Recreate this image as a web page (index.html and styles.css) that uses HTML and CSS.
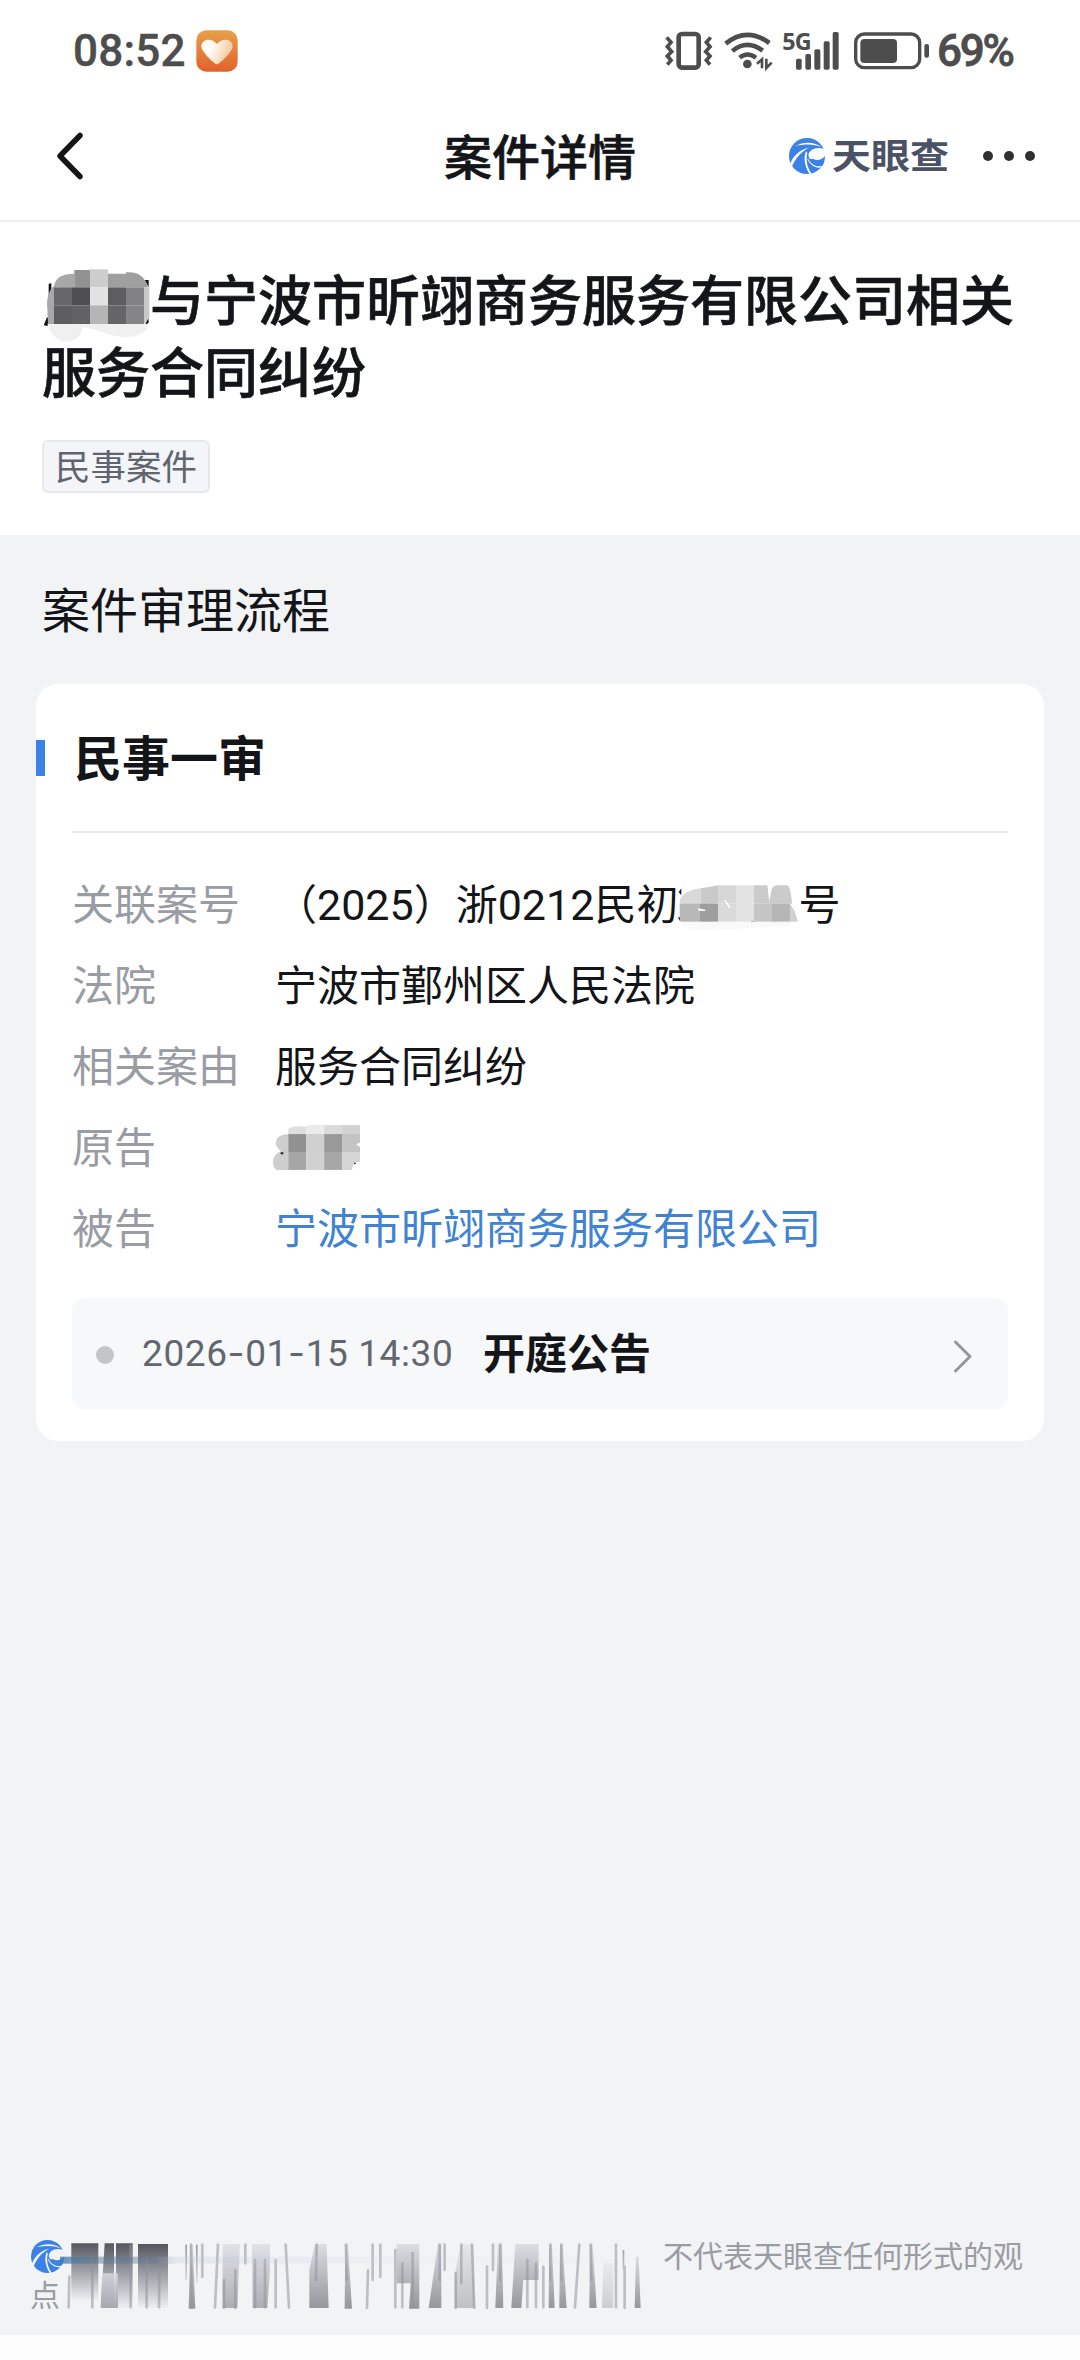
FILE: index.html
```html
<!DOCTYPE html>
<html lang="zh-CN">
<head>
<meta charset="utf-8">
<title>案件详情</title>
<link rel="stylesheet" href="styles.css">
</head>
<body>
<svg class="defs" aria-hidden="true">
  <defs>
    <symbol id="swirl" viewBox="0 0 108 108">
      <circle cx="54" cy="54" r="54" fill="#3c82e6"/>
      <path d="M103 32 C88 27 68 30 60 44 C55 55 62 68 78 70 L109 72 V34Z" fill="var(--hole)"/>
      <path d="M72 62 C84 70 98 66 108 54 C108 66 105 76 100 84 C84 84 70 76 62 64Z" fill="#3c82e6"/>
      <path d="M2 80 C14 50 34 34 60 29 C40 38 20 58 8 88Z M18 24 C44 10 78 10 98 28 C76 17 46 18 18 24Z M51 40 C42 62 48 88 62 109 L68 108 C53 88 50 64 55 44Z M57 62 C66 80 84 88 99 84 L97 88 C80 92 64 82 55 64Z" fill="var(--hole)"/>
    </symbol>
    <linearGradient id="heart-bg" x1="0" y1="0" x2="0" y2="1"><stop offset="0" stop-color="#e8a04a"/><stop offset="1" stop-color="#e0622c"/></linearGradient>
    <linearGradient id="heart-fg" x1="0" y1="0" x2="1" y2="0.3"><stop offset="0.4" stop-color="#fffaf4"/><stop offset="1" stop-color="#f4c99c"/></linearGradient>
    <linearGradient id="fall" x1="0" y1="0" x2="0" y2="1"><stop offset="0" stop-color="#54565e"/><stop offset="0.45" stop-color="#9a9ca3"/><stop offset="1" stop-color="#eeeff1"/></linearGradient>
    <linearGradient id="rise" x1="0" y1="0" x2="0" y2="1"><stop offset="0" stop-color="#dcdce3"/><stop offset="1" stop-color="#96979d"/></linearGradient>
    <linearGradient id="thin" x1="0" y1="0" x2="0" y2="1"><stop offset="0" stop-color="#97979d"/><stop offset="1" stop-color="#dcdde1"/></linearGradient>
    <linearGradient id="fade" x1="0" y1="0" x2="1" y2="0"><stop offset="0" stop-color="#3f78b5" stop-opacity=".8"/><stop offset="0.06" stop-color="#5b7893" stop-opacity=".5"/><stop offset="0.17" stop-color="#62799a" stop-opacity=".4"/><stop offset="0.21" stop-color="#b9c4d8" stop-opacity=".25"/><stop offset="0.7" stop-color="#c5cddd" stop-opacity="0.05"/></linearGradient>
  </defs>
</svg>

<header class="top">
  <div class="status">
    <div class="status-left">
      <span class="clock">08:52</span>
      <svg class="heart" viewBox="0 0 126 126"><rect x="1" y="1" width="124" height="124" rx="30" fill="url(#heart-bg)"/><path d="M63 103 C58 103 18 68 16 50 C15 28 46 20 63 42 C80 20 111 28 110 50 C108 68 68 103 63 103Z" fill="url(#heart-fg)"/></svg>
    </div>
    <div class="status-right">
      <svg class="signals" viewBox="0 0 800 120" fill="none" stroke="#4d4d4d">
        <rect x="41" y="9" width="60" height="101" rx="10" stroke-width="14"/>
        <path d="M5 19 L18 34 L7 47 L20 62 L7 75 L18 88 L7 101 M137 19 L124 34 L135 47 L122 62 L135 75 L124 88 L135 101" stroke-width="11"/>
        <path d="M182 38 Q245 -14 313 36" stroke-width="14"/>
        <path d="M202 60 Q246 24 293 59" stroke-width="14"/>
        <path d="M224 80 Q247 61 273 80" stroke-width="13"/>
        <path d="M291 112 V85 L276 98 M304 83 V111 L320 95" stroke-width="8"/>
        <g fill="#4d4d4d" stroke="none"><circle cx="247" cy="99" r="13"/>
          <rect x="393" y="83" width="17" height="33" rx="5"/><rect x="421" y="69" width="17" height="47" rx="5"/><rect x="448" y="55" width="18" height="61" rx="5"/><rect x="476" y="31" width="18" height="85" rx="5"/><rect x="503" y="3" width="18" height="113" rx="5"/>
          <rect x="586" y="24" width="110" height="72" rx="12"/><rect x="778" y="39" width="14" height="41" rx="6"/></g>
        <rect x="572" y="9" width="192" height="101" rx="26" stroke-width="10"/>
        <text class="net" x="352" y="56">5G</text>
      </svg>
      <span class="percent">69%</span>
    </div>
  </div>
  <nav class="nav">
    <svg class="back" viewBox="0 0 30 48"><path d="M25 3.500 L5 24 L25 44.500" fill="none" stroke="#141414" stroke-width="5.500" stroke-linecap="round" stroke-linejoin="round"/></svg>
    <h1 class="nav-title">案件详情</h1>
    <div class="nav-right">
      <svg class="brand-mark"><use href="#swirl"/></svg>
      <span class="brand">天眼查</span>
      <span class="more"><i></i><i></i><i></i></span>
    </div>
  </nav>
</header>

<section class="case">
  <h2 class="case-title"><svg class="mask-name" viewBox="0 0 324 240">
    <path d="M20 48 l8 -3 v40 l-8 30z M5 172 l10 -24 l10 2 l-8 24z M308 36 h12 v22z M308 172 l12 -24 v16z" fill="#141414"/>
    <path d="M16 168 H318 C318 200 270 214 220 204 C190 200 160 180 122 178 C120 205 95 224 70 221 C45 220 25 195 16 168Z" fill="#f0f0f0"/>
    <path d="M16 122 C12 90 24 60 36 55 C40 28 60 18 97 17 V58 H36 V168 H18Z" fill="#a8a8a8"/>
    <path d="M97 17 V6 H144 V58 H97Z" fill="#929292"/><path d="M144 4 H198 V58 H144Z" fill="#cdcdcd"/><path d="M198 17 H252 V58 H198Z M252 13 C290 10 310 28 318 58 H252Z" fill="#9f9f9f"/>
    <path d="M306 58 H322 V150 L306 168Z" fill="#c8c8c8"/>
    <rect x="36" y="58" width="54" height="54" fill="#666668"/><rect x="90" y="58" width="54" height="54" fill="#4e4e50"/><rect x="144" y="58" width="54" height="54" fill="#e2e2e2"/><rect x="198" y="58" width="54" height="54" fill="#5d5d60"/><rect x="252" y="58" width="54" height="54" fill="#818183"/>
    <rect x="36" y="112" width="54" height="56" fill="#5d5d60"/><rect x="90" y="112" width="54" height="56" fill="#626264"/><rect x="144" y="112" width="54" height="56" fill="#b5b5b5"/><rect x="198" y="112" width="54" height="56" fill="#656568"/><rect x="252" y="112" width="54" height="56" fill="#858588"/>
  </svg>与宁波市昕翊商务服务有限公司相关服务合同纠纷</h2>
  <span class="tag">民事案件</span>
</section>

<main class="flow">
  <h3 class="flow-title">案件审理流程</h3>
  <article class="card">
    <h4 class="card-title">民事一审</h4>
    <dl class="facts">
      <dt>关联案号</dt>
      <dd>（<b>2025</b>）浙<b>0212</b>民初<svg class="mask-no" viewBox="0 0 360 132">
        <path d="M2 28 l8 -12 v20z M0 104 l10 -4 l2 14 l-8 -2z M218 120 l4 -12 l10 12z" fill="#141414"/>
        <path d="M8 116 H345 Q330 138 300 128 Q150 142 50 140 Q20 136 8 116Z" fill="#f9f9f9"/>
        <path d="M5 62 Q5 24 68 16 V62Z" fill="#d9d9d9"/><path d="M68 16 Q100 12 120 7 V62 H68Z" fill="#c9c9c9"/><path d="M120 7 H174 V62 H120Z" fill="#d7d7d7"/><path d="M174 7 H228 V116 H174Z" fill="#e3e3e3"/><path d="M228 7 H268 L274 58 L280 22 Q284 7 300 7 H328 Q338 12 342 62 H228Z" fill="#cbcbcb"/>
        <rect x="5" y="62" width="61" height="54" fill="#b8b8b8"/><rect x="66" y="62" width="54" height="54" fill="#9e9e9e"/><rect x="120" y="62" width="54" height="54" fill="#dadada"/><rect x="228" y="62" width="54" height="54" fill="#c5c5c5"/><rect x="282" y="62" width="54" height="54" fill="#b6b6b6"/><path d="M336 62 L350 84 L360 116 H336Z" fill="#d0d0d0"/>
        <path d="M60 76 l22 4 v4 l-20 -1z M138 52 l5 0 l16 22 h-6z" fill="#fff"/>
      </svg>号</dd>
      <dt>法院</dt>
      <dd>宁波市鄞州区人民法院</dd>
      <dt>相关案由</dt>
      <dd>服务合同纠纷</dd>
      <dt>原告</dt>
      <dd><svg class="mask-plaintiff" viewBox="0 0 265 135">
        <path d="M46 10 Q70 0 100 5 V27 H46Z" fill="#dedede"/><rect x="100" width="54" height="27" fill="#ebebeb"/><rect x="154" width="54" height="27" fill="#dadada"/><rect x="208" width="54" height="27" fill="#d2d2d2"/>
        <path d="M46 27 Q10 28 8 54 Q9 68 24 78 Q0 88 0 112 Q0 128 10 135 H46Z" fill="#cecece"/>
        <rect x="46" y="27" width="54" height="54" fill="#919191"/><rect x="100" y="27" width="54" height="54" fill="#cfcfcf"/><rect x="154" y="27" width="54" height="54" fill="#999"/><path d="M208 27 H262 V53 L250 58 L262 66 V81 H208Z" fill="#c3c3c3"/>
        <rect x="46" y="81" width="54" height="54" fill="#a6a6a6"/><rect x="100" y="81" width="54" height="54" fill="#d1d1d1"/><rect x="154" y="81" width="54" height="54" fill="#a7a7a7"/><path d="M208 81 H262 V112 Q240 110 238 135 H208Z" fill="#d6d6d6"/>
        <path d="M23 82 h8 v6 h-8z M244 113 l7 2 l-6 4z" fill="#222"/>
      </svg></dd>
      <dt>被告</dt>
      <dd class="link">宁波市昕翊商务服务有限公司</dd>
    </dl>
    <div class="event">
      <span class="dot"></span>
      <span class="date">2026<i>-</i>01<i>-</i>15 14:30</span>
      <strong class="event-name">开庭公告</strong>
      <svg class="chevron" viewBox="0 0 20 34"><path d="M3.500 3 L18 17.500 L3.500 32" fill="none" stroke="#94969c" stroke-width="3" stroke-linecap="round" stroke-linejoin="round"/></svg>
    </div>
  </article>
</main>

<footer class="foot">
  <p class="disclaimer"><svg class="foot-mark"><use href="#swirl"/></svg><span class="blank"></span>不代表天眼查任何形式的观点</p>
  <svg class="smear" viewBox="0 0 1900 210">
    <g fill="url(#fall)">
      <path d="M184 70H265V240H184Z"/>
      <path d="M284 70H312V264H272Z"/><path d="M318 70H368V264H318Z"/><path d="M384 72H474V264H384Z"/>
    </g>
    <g fill="url(#rise)">
      <path d="M276 160H324V264H272Z" opacity=".8"/><path d="M541 72H548L556 266H536Z"/><path d="M898 150L915 72H950L956 264H898Z"/><path d="M1006 72H1014L1026 266H1004Z"/>
      <path d="M1160 72H1228V200L1228 266H1197L1202 190H1160Z"/><path d="M1284 72H1294L1294 264H1256Z"/><path d="M1352 72H1390L1394 264H1335V160Z" opacity=".55"/><path d="M1464 72H1476L1480 264H1456Z"/><path d="M1516 72H1586V180H1540L1534 264H1504Z"/>
      <path d="M1618 72H1626L1634 264H1616Z M1650 72H1658L1670 264H1648Z M1740 72H1748L1760 264H1738Z"/><path d="M1780 130H1810V264H1776Z" opacity=".4"/><path d="M1878 110H1886L1892 264H1874Z"/>
      <path d="M638 72H690L682 264H638Z" opacity=".75"/><path d="M726 72H780V150L772 264H728Z" opacity=".75"/>
    </g>
    <g fill="none" stroke="#929399" stroke-width="8" stroke-linecap="round" opacity=".55">
      <path d="M178 170 L176 262 M247 120 L247 262 M362 76 L362 262 M410 120 L410 262 M448 150 L447 262 M543 74 L545 262 M577 74 L577 170 M624 74 L615 262 M642 180 V264 M676 150 V264 M706 74 V130 M735 120 V262 M765 120 V262 M797 120 V262 M827 74 L837 262 M920 74 L918 180 M1008 74 L1010 180 M1088 74 V180 M1111 74 V170 M1074 150 L1071 264 M1156 90 V262 M1177 130 V262 M1208 100 V262 M1289 74 V180 M1304 74 V150 M1354 74 V190 M1337 160 V264 M1386 74 L1393 264 M1449 74 V150 M1471 74 V180 M1431 140 V264 M1552 120 V262 M1578 130 V262 M1600 140 V262 M1621 74 V180 M1654 74 V180 M1708 74 L1695 262 M1742 74 L1744 180 M1818 74 V262 M1844 140 V264"/>
    </g>
    <path d="M526 74 h5 V180 h-5z M558 74 h5 V190 h-5z M1838 90 h5 V150 h-5z" fill="url(#thin)"/>
    <rect x="150" y="110" width="1660" height="21" fill="url(#fade)"/>
  </svg>
</footer>
<div class="home-strip"></div>
</body>
</html>
```
FILE: styles.css
```css
* { box-sizing: border-box; margin: 0; padding: 0; }
body {
  --hole: #fff;
  width: 1080px; height: 2360px; display: flex; flex-direction: column; overflow: hidden;
  background: #f2f3f5; color: #141518;
  font-family: "Noto Sans CJK SC", sans-serif;
}
svg { display: block; flex: none; overflow: visible; }
.defs { position: absolute; width: 0; height: 0; }

.top { height: 222px; background: #fff; border-bottom: 2px solid #ededef; display: flex; flex-direction: column; }
.status { height: 102px; padding: 0 66px 0 73px; display: flex; align-items: center; justify-content: space-between; color: #4d4d4d; }
.status-left, .status-right { display: flex; align-items: center; }
.clock { font: 500 44px/60px Roboto, sans-serif; width: 123px; letter-spacing: .2px; -webkit-text-stroke: .4px; }
.heart { width: 42px; height: 42px; }
.signals { width: 266.700px; height: 40px; }
.net { font: 700 70px "Open Sans", Roboto, sans-serif; fill: #4d4d4d; stroke: none; letter-spacing: -3px; }
.percent { font: 500 44px/60px Roboto, sans-serif; letter-spacing: -2.200px; margin-left: 5px; width: 77px; white-space: nowrap; -webkit-text-stroke: .8px; }

.nav { height: 108px; padding: 0 45px; display: grid; grid-template-columns: 1fr auto 1fr; align-items: center; }
.back { width: 30px; height: 48px; margin-left: 10px; }
.nav-title { font-size: 48px; line-height: 72px; font-weight: 500; margin-bottom: 5px; -webkit-text-stroke: .6px; }
.nav-right { display: flex; align-items: center; justify-content: flex-end; }
.brand-mark { width: 36px; height: 36px; }
.brand { font-size: 39px; line-height: 48px; font-weight: 700; color: #4b5267; margin: -4px 34px 0 7px; transform: scaleY(.9); }
.more { display: flex; gap: 11px; }
.more i { width: 10px; height: 10px; border-radius: 50%; background: #303030; }

.case { height: 313px; background: #fff; padding: 40px 42px 0; display: flex; flex-direction: column; align-items: flex-start; }
.case-title { font-size: 54px; line-height: 72px; font-weight: 500; width: 990px; -webkit-text-stroke: .6px; }
.mask-name { display: inline-block; width: 108px; height: 80px; margin: 6px 0 -14px; vertical-align: top; }
.tag { margin-top: 34px; height: 53px; padding: 0 11px; border: 2px solid #e6e8ec; border-radius: 6px; background: #f3f5f8; color: #60646f; font-size: 35.500px; line-height: 46px; }

.flow { flex: 1; padding: 36px 36px 0; }
.flow-title { font-size: 48px; line-height: 72px; font-weight: 400; padding-left: 6px; }
.card { margin-top: 41px; height: 757px; padding: 0 36px; background: #fff; border-radius: 22px; }
.card-title { height: 149px; padding-bottom: 5px; border-bottom: 2px solid #e9e9eb; font-size: 48px; line-height: 140px; font-weight: 700; display: flex; align-items: center; }
.card-title::before { content: ""; width: 9px; height: 36px; background: #3c82e6; margin: 5px 29px 0 -36px; }
.facts { display: grid; grid-template-columns: 203px 1fr; grid-auto-rows: 81px; padding-top: 28px; font-size: 42px; line-height: 81px; }
.facts dt { color: #9a9ca4; }
.facts dd { white-space: nowrap; }
.facts b { font: 400 43px/60px Roboto, sans-serif; }
.facts .link { color: #3f83d2; }
.mask-no { display: inline-block; width: 120px; height: 44px; vertical-align: -7px; }
.mask-plaintiff { width: 88px; height: 45px; margin: 21px 0 0 -2px; }
.event { margin-top: 32px; height: 111px; padding: 0 36px 0 24px; border-radius: 12px; background: #f7f8fa; display: flex; align-items: center; }
.dot { width: 18px; height: 18px; border-radius: 50%; background: #c4c5c9; margin-top: 2px; }
.date { margin-left: 28px; width: 341px; font: 400 37px/50px Roboto, sans-serif; letter-spacing: .6px; color: #63666e; white-space: nowrap; }
.date i { font-family: Inter, sans-serif; font-style: normal; }
.event-name { font-size: 42px; line-height: 60px; font-weight: 700; margin-bottom: 6px; }
.chevron { width: 20px; height: 34px; margin: 4px 0 0 auto; }

.foot { --hole: #f2f3f5; position: relative; height: 98px; padding: 0 30px; }
.disclaimer { font-size: 30px; line-height: 39px; color: #999ca3; margin-top: -2px; }
.foot-mark { display: inline-block; width: 33px; height: 33px; margin: 0 0 0 1px; vertical-align: -6px; }
.blank { display: inline-block; width: 599px; }
.smear { position: absolute; left: 10px; top: -17px; width: 633.300px; height: 70px; }
.home-strip { height: 25px; background: #fcfcfc; }
```
